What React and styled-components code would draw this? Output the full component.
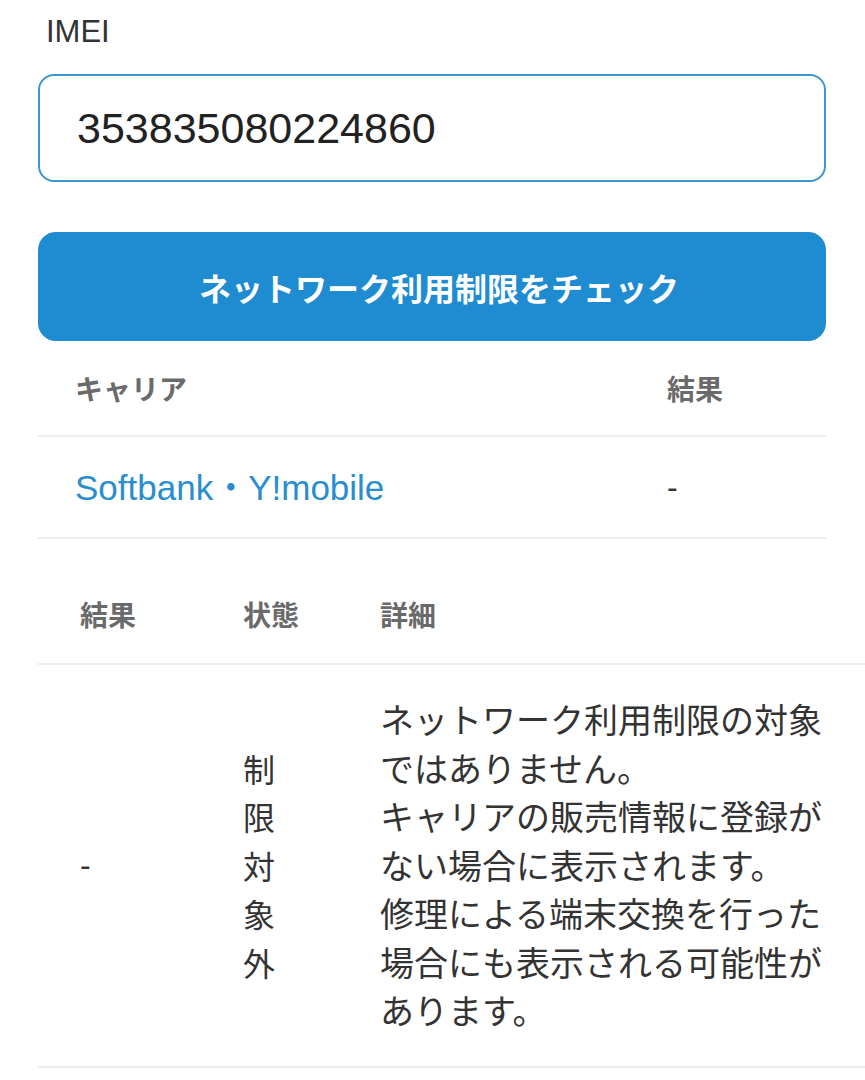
import React from "react";
import styled, { createGlobalStyle } from "styled-components";

const Global = createGlobalStyle`
  html, body { margin: 0; padding: 0; background: #fff; overflow-x: hidden; }
  body { font-family: "Liberation Sans", "Noto Sans CJK JP", sans-serif; color: #333; }
`;

const Page = styled.div`
  padding: 14px 39px 0 38px;
  display: flex;
  flex-direction: column;
`;

const Label = styled.label`
  margin-left: 8px;
  font-size: 31px;
  line-height: 36px;
  color: #333;
`;

const Input = styled.input`
  margin-top: 24px;
  box-sizing: border-box;
  height: 108px;
  width: 100%;
  border: 2px solid #3d96d2;
  border-radius: 16px;
  padding: 0 0 0 37px;
  font-family: "Liberation Sans", sans-serif;
  font-size: 43px;
  color: #222;
  outline: none;
  background: #fff;
`;

const Button = styled.button`
  margin-top: 50px;
  height: 109px;
  width: 100%;
  border: none;
  border-radius: 18px;
  background: #1f8bd0;
  color: #fff;
  padding: 0 0 0 14px;
  font-family: "Noto Sans CJK JP", sans-serif;
  font-weight: 700;
  font-size: 32px;
  letter-spacing: 0;
`;

const CarrierTable = styled.div`
  display: grid;
  grid-template-columns: 587px 1fr;
`;

const Cell = styled.div`
  box-sizing: border-box;
  display: flex;
  align-items: center;
  height: ${(p) => p.$h}px;
  padding-left: ${(p) => p.$pl}px;
  border-bottom: 2px solid #eeeeee;
`;

const HeadText = styled.span`
  font-family: "Noto Sans CJK JP", sans-serif;
  font-weight: 700;
  font-size: 28px;
  line-height: 1;
  color: #6a6a6a;
`;

const CarrierName = styled.span`
  font-size: 35px;
  line-height: 1;
  color: #2a8dcf;
`;

const Dash = styled.span`
  font-size: 32px;
  line-height: 1;
  color: #333;
`;

const ResultTable = styled.div`
  margin-top: 26px;
  margin-right: -60px;
  display: grid;
  grid-template-columns: 163px 137px 1fr;
`;

const TallCell = styled.div`
  box-sizing: border-box;
  display: flex;
  align-items: center;
  padding: ${(p) => (p.$head ? "0" : "30px")} 0 ${(p) => (p.$head ? "0" : "31px")} 42px;
  height: ${(p) => (p.$head ? "100px" : "auto")};
  border-bottom: 2px solid #eeeeee;
`;

const Vertical = styled.span`
  width: 1em;
  font-family: "Noto Sans CJK JP", sans-serif;
  font-size: 32px;
  line-height: 48.5px;
  color: #333;
  word-break: break-all;
`;

const Detail = styled.p`
  margin: 0;
  width: 455px;
  font-family: "Noto Sans CJK JP", sans-serif;
  font-size: 34px;
  line-height: 48.5px;
  color: #333;
`;

const details = [
  "ネットワーク利用制限の対象ではありません。",
  "キャリアの販売情報に登録がない場合に表示されます。",
  "修理による端末交換を行った場合にも表示される可能性があります。",
];

export default function App() {
  return (
    <>
      <Global />
      <Page>
        <Label>IMEI</Label>
        <Input readOnly value="353835080224860" />
        <Button>ネットワーク利用制限をチェック</Button>
        <CarrierTable>
          <Cell $h={96} $pl={37}><HeadText>キャリア</HeadText></Cell>
          <Cell $h={96} $pl={42}><HeadText>結果</HeadText></Cell>
          <Cell $h={102} $pl={37}><CarrierName>Softbank・Y!mobile</CarrierName></Cell>
          <Cell $h={102} $pl={42}><Dash>-</Dash></Cell>
        </CarrierTable>
        <ResultTable>
          <TallCell $head><HeadText>結果</HeadText></TallCell>
          <TallCell $head><HeadText>状態</HeadText></TallCell>
          <TallCell $head><HeadText>詳細</HeadText></TallCell>
          <TallCell><Dash>-</Dash></TallCell>
          <TallCell><Vertical>制限対象外</Vertical></TallCell>
          <TallCell>
            <Detail>
              {details.map((d, i) => (
                <React.Fragment key={i}>
                  {d}
                  {i < details.length - 1 && <br />}
                </React.Fragment>
              ))}
            </Detail>
          </TallCell>
        </ResultTable>
      </Page>
    </>
  );
}
